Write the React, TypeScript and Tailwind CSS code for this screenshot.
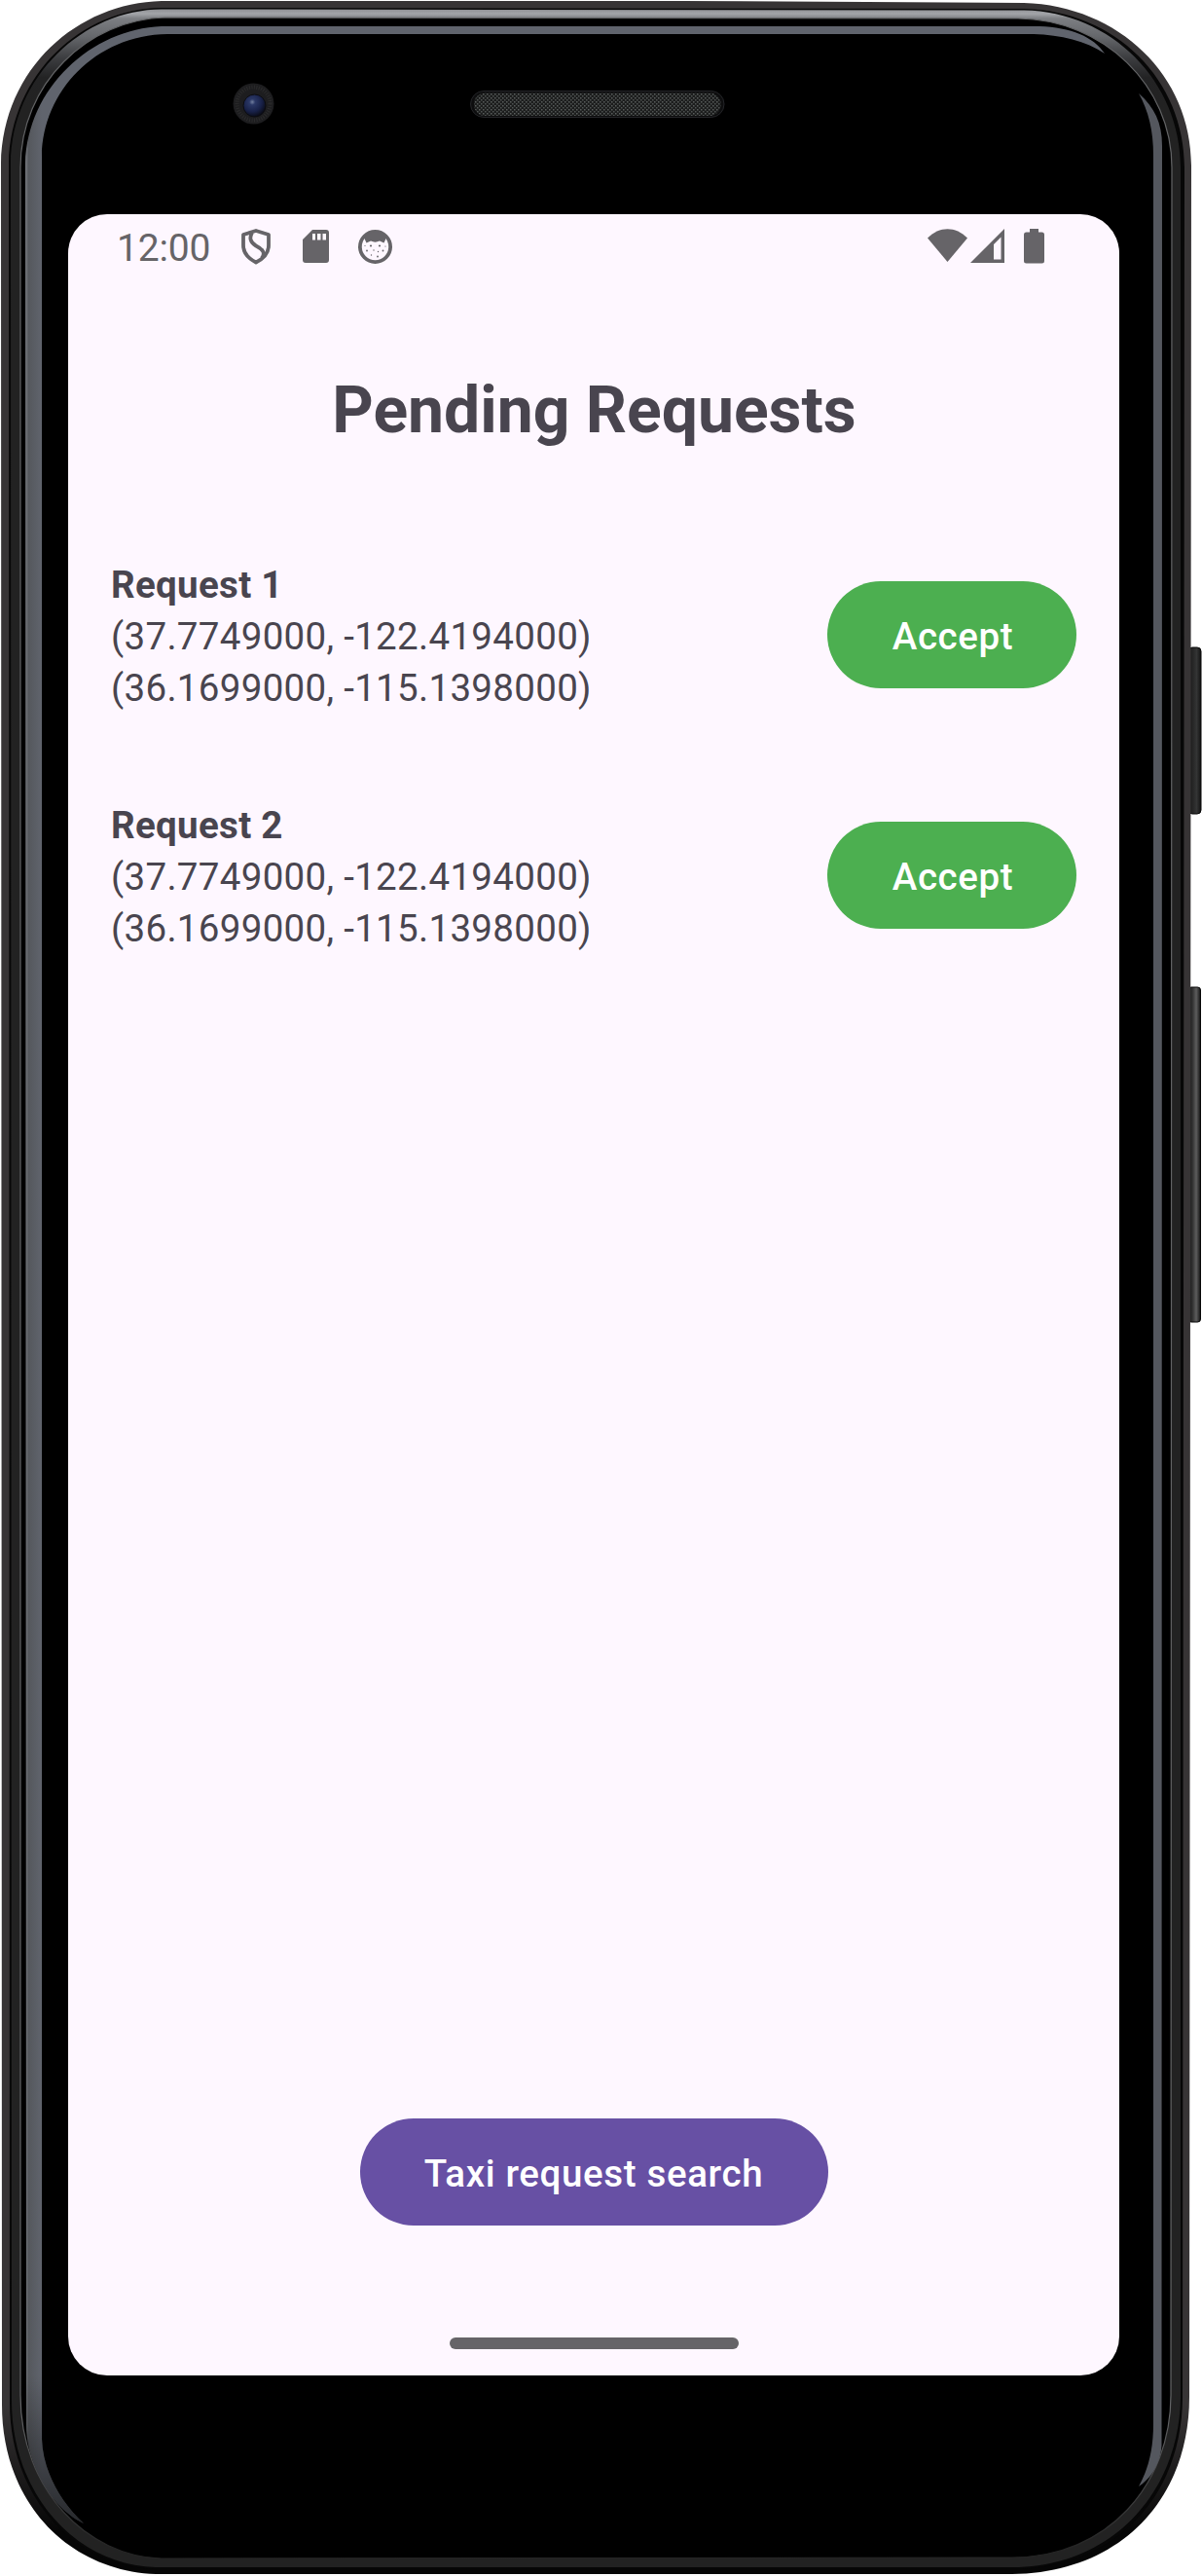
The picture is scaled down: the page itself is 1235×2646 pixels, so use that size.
import React from "react";

const OUTER =
  "M166 1 L700 1 L1052 3 C1150 6 1224 78 1224 170 L1222 2462 C1222 2568 1150 2643 1040 2644 L160 2644 C72 2641 2 2572 2 2470 L1 168 C3 70 80 3 166 1 Z";
const GROOVE =
  "M166 8 L1052 9 C1146 11 1217 82 1217 172 L1215 2462 C1215 2563 1146 2639 1040 2639 L160 2639 C78 2637 10 2566 10 2468 L9 168 C11 76 84 9 166 8 Z";
const BAND =
  "M166 9.5 L1052 10.5 C1142 12 1213 84 1213 172 L1213 2462 C1212 2560 1142 2637 1040 2637 L160 2637 C80 2635 12 2564 12 2466 L11 168 C12 78 86 10 166 9.5 Z";
const LIP =
  "M170 18 L1046 19 C1134 20 1204 88 1204 172 L1203 2460 C1203 2552 1138 2627 1040 2627 L166 2628 C90 2626 21 2558 21 2460 L21 172 C21 86 90 20 170 18 Z";
const GLASS =
  "M172 21 L1044 22 C1132 23 1202 90 1202 174 L1201 2458 C1201 2550 1136 2626 1040 2626 L166 2627 C92 2625 25 2556 25 2458 L25 174 C25 90 92 22 172 21 Z";

function PhoneFrame() {
  return (
    <svg className="absolute inset-0" width="1235" height="2646" viewBox="0 0 1235 2646" aria-hidden="true">
      <defs>
        <linearGradient id="shell" gradientUnits="userSpaceOnUse" x1="0" y1="2470" x2="0" y2="2600">
          <stop offset="0" stopColor="#373435" />
          <stop offset="1" stopColor="#060606" />
        </linearGradient>
        <linearGradient id="band" gradientUnits="userSpaceOnUse" x1="0" y1="9" x2="0" y2="110">
          <stop offset="0" stopColor="#8b8c90" />
          <stop offset="0.05" stopColor="#a3a5a9" />
          <stop offset="0.1" stopColor="#7c7e82" />
          <stop offset="0.28" stopColor="#66686c" />
          <stop offset="0.5" stopColor="#3c3d40" />
          <stop offset="0.7" stopColor="#232324" />
          <stop offset="1" stopColor="#222222" />
        </linearGradient>
        <linearGradient id="lip" gradientUnits="userSpaceOnUse" x1="0" y1="2480" x2="0" y2="2620">
          <stop offset="0" stopColor="#626365" />
          <stop offset="1" stopColor="#242424" />
        </linearGradient>
        <linearGradient id="leftGlow" gradientUnits="userSpaceOnUse" x1="26" y1="0" x2="43" y2="0">
          <stop offset="0" stopColor="#777a7f" />
          <stop offset="0.2" stopColor="#55585d" />
          <stop offset="1" stopColor="#60646d" />
        </linearGradient>
        <linearGradient id="leftFade" gradientUnits="userSpaceOnUse" x1="0" y1="2440" x2="0" y2="2595">
          <stop offset="0" stopColor="#000" stopOpacity="0" />
          <stop offset="1" stopColor="#000" stopOpacity="0.6" />
        </linearGradient>
        <linearGradient id="key" x1="0" y1="0" x2="1" y2="0">
          <stop offset="0" stopColor="#161616" />
          <stop offset="0.35" stopColor="#262626" />
          <stop offset="0.65" stopColor="#343535" />
          <stop offset="1" stopColor="#111" />
        </linearGradient>
        <linearGradient id="keyLight" x1="0" y1="0" x2="1" y2="0">
          <stop offset="0" stopColor="#141414" />
          <stop offset="0.35" stopColor="#333" />
          <stop offset="0.65" stopColor="#5d5d5d" />
          <stop offset="1" stopColor="#111" />
        </linearGradient>
        <pattern id="mesh" width="4" height="4" patternUnits="userSpaceOnUse">
          <rect width="4" height="4" fill="#1c1d1d" />
          <rect width="1.5" height="1.5" fill="#5a5e5d" />
          <rect x="2" y="2" width="1.5" height="1.5" fill="#505453" />
        </pattern>
        <radialGradient id="lens" cx="0.4" cy="0.34" r="0.66">
          <stop offset="0" stopColor="#73809f" />
          <stop offset="0.2" stopColor="#2b3866" />
          <stop offset="0.65" stopColor="#182148" />
          <stop offset="1" stopColor="#0a0c18" />
        </radialGradient>
      </defs>

      <rect x="1221" y="665" width="13" height="171" rx="4" fill="url(#key)" stroke="#080808" />
      <rect x="1221" y="1014" width="12.5" height="344" rx="3" fill="url(#keyLight)" stroke="#080808" />

      <path d={OUTER} fill="url(#shell)" />
      <path d={GROOVE} fill="#070707" />
      <path d={BAND} fill="url(#band)" />
      <path d={LIP} fill="#000" stroke="url(#lip)" strokeWidth="1.2" />
      <path d={GLASS} fill="#000" />

      <path
        d="M26 168 C28 90 94 30 166 27 L1068 27 C1100 28 1124 38 1135 55 C1116 42 1090 36 1062 35 L172 35 C98 36 44 94 43 160 L43 2505 C44 2538 62 2570 86 2592 C52 2576 27 2530 27 2490 Z"
        fill="url(#leftGlow)"
      />
      <path d="M43 2440 L43 2505 C44 2538 62 2570 86 2592 C52 2576 27 2530 27 2490 L27 2440 Z" fill="url(#leftFade)" />
      <path
        d="M1170 96 C1186 110 1194 126 1194 150 L1193.500 2512 C1192 2532 1182 2546 1170 2554 C1180 2536 1185 2516 1185 2490 L1185 160 C1185 134 1180 114 1170 96 Z"
        fill="#54575e"
      />

      <circle cx="260.500" cy="106.500" r="21" fill="#1d1d1f" />
      <circle cx="260.500" cy="106.500" r="17" fill="none" stroke="#2b2b2c" strokeWidth="4" strokeDasharray="1 1.500" />
      <circle cx="261.500" cy="108.500" r="11.500" fill="url(#lens)" stroke="#0c0c10" />

      <rect x="483.500" y="93.500" width="260.500" height="27" rx="13.500" fill="#0d0d0e" stroke="#242528" />
      <rect x="487" y="95.500" width="253.500" height="23.500" rx="11.500" fill="url(#mesh)" />
    </svg>
  );
}

function StatusBar() {
  return (
    <div className="flex h-[66px] items-start justify-between pl-[50px] pr-[77px] text-[#666468]">
      <div className="flex items-start">
        <span className="w-[98px] pt-[12px] text-[39px] leading-[46px] tracking-[-0.200px] whitespace-nowrap">12:00</span>
        <svg className="mt-[14px] ml-[29px]" width="32" height="38" viewBox="0 0 32 38" fill="none" stroke="currentColor" strokeWidth="3.800" strokeLinejoin="round">
          <path d="M16 3 L29 7 V18 C29 26 23 32 16 35.500 C9 32 3 26 3 18 V7 Z" />
          <path d="M12 5 C9 10 10 15 16 18.500 C23 22 26 26 22 31" />
        </svg>
        <svg className="mt-[16px] ml-[32px]" width="27" height="34" viewBox="0 0 27 34" fill="currentColor">
          <path
            fillRule="evenodd"
            d="M10 0 H24 A3 3 0 0 1 27 3 V31 A3 3 0 0 1 24 34 H3 A3 3 0 0 1 0 31 V10 Z M10 4 V10.500 H13 V4 Z M15 4 V10.500 H18.500 V4 Z M20.500 4 V10.500 H24 V4 Z"
          />
        </svg>
        <svg className="mt-[16px] ml-[30px]" width="35" height="35" viewBox="0 0 35 35">
          <circle cx="17.500" cy="17.500" r="15.600" fill="none" stroke="currentColor" strokeWidth="3.800" />
          <path d="M6 8 C10 1 25 1 29 8 L26.500 13.500 L22 11.500 C19 13 16 13 13 11.500 L8.500 13.500 Z" fill="currentColor" />
          <g fill="currentColor">
            <circle cx="13" cy="16.500" r="1.100" />
            <circle cx="22" cy="16.500" r="1.100" />
            <circle cx="9" cy="21.500" r="0.900" />
            <circle cx="16" cy="21" r="0.700" />
            <circle cx="25.500" cy="21.500" r="0.900" />
            <circle cx="13.500" cy="26" r="0.700" />
            <circle cx="20" cy="27.500" r="0.900" />
            <circle cx="7" cy="16.500" r="0.600" />
            <circle cx="28" cy="17" r="0.600" />
            <circle cx="20.500" cy="22.500" r="0.700" />
          </g>
        </svg>
      </div>
      <div className="flex items-start">
        <svg className="mt-[15px]" width="41" height="34" viewBox="0 0 41 34" fill="currentColor">
          <path d="M0 9.500 C12 -3 29 -3 41 9.500 L20.500 34 Z" />
        </svg>
        <svg className="mt-[15px] ml-[3px]" width="35" height="35" viewBox="0 0 35 35" fill="currentColor">
          <path fillRule="evenodd" d="M35 0 V35 H0 Z M31.500 8.500 L24 16 V31.500 H31.500 Z" />
        </svg>
        <svg className="mt-[15px] ml-[20px]" width="21" height="36" viewBox="0 0 21 36" fill="currentColor">
          <path d="M6 0 H15 V3.500 H18.500 A2.500 2.500 0 0 1 21 6 V33 A2.500 2.500 0 0 1 18.500 35.500 H2.500 A2.500 2.500 0 0 1 0 33 V6 A2.500 2.500 0 0 1 2.500 3.500 H6 Z" />
        </svg>
      </div>
    </div>
  );
}

const requests = [
  { name: "Request 1", from: "(37.7749000, -122.4194000)", to: "(36.1699000, -115.1398000)" },
  { name: "Request 2", from: "(37.7749000, -122.4194000)", to: "(36.1699000, -115.1398000)" },
];

export default function App() {
  return (
    <div className="relative h-[2646px] w-[1235px] overflow-hidden bg-white pt-[220px] pl-[70px] font-[Roboto,sans-serif]">
      <PhoneFrame />
      <main className="relative flex h-[2220px] w-[1080px] flex-col rounded-[40px] bg-[#fef7ff] text-[#49454f]">
        <StatusBar />
        <h1 className="mt-[97px] pl-px text-center text-[66px] leading-[77px] font-bold">Pending Requests</h1>
        <ul className="mt-[114px] flex flex-col gap-[88px] px-[44px]">
          {requests.map((r) => (
            <li key={r.name} className="flex h-[159px] items-start justify-between">
              <div className="text-[38.500px] leading-[53px] tracking-[0.310px]">
                <p className="font-bold">{r.name}</p>
                <p>{r.from}</p>
                <p>{r.to}</p>
              </div>
              <button className="mt-[23px] h-[110px] w-[256px] rounded-full bg-[#4caf50] pt-[3px] pl-[2px] text-[38.500px] font-medium tracking-[0.600px] text-white">
                Accept
              </button>
            </li>
          ))}
        </ul>
        <button className="mt-auto h-[110px] w-[481px] self-center rounded-full bg-[#6750a4] pt-[4px] text-[38.500px] font-medium tracking-[0.650px] text-white">
          Taxi request search
        </button>
        <div className="mt-[115px] mb-[27.500px] h-[11.500px] w-[297px] self-center rounded-full bg-[#666468]" />
      </main>
    </div>
  );
}
